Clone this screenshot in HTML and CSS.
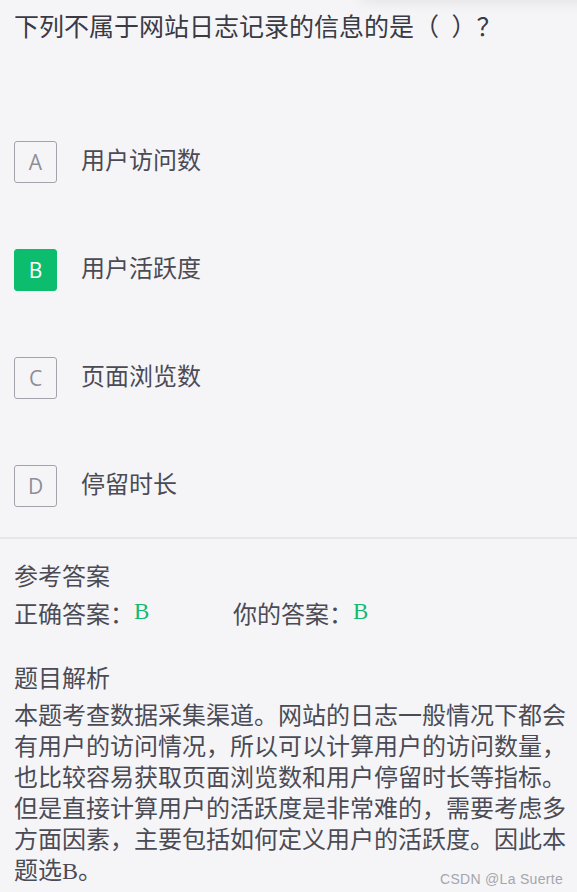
FILE: index.html
```html
<!DOCTYPE html>
<html lang="zh-CN">
<head>
  <meta charset="UTF-8">
  <title>题目详情</title>
  <link rel="stylesheet" href="styles.css">
</head>
<body>
  <div class="top-shade"></div>
  <div class="page">
    <div class="question">下列不属于网站日志记录的信息的是（&ensp;）？</div>

    <ul class="options">
      <li class="option"><span class="opt-key">A</span><span class="opt-text">用户访问数</span></li>
      <li class="option"><span class="opt-key selected">B</span><span class="opt-text">用户活跃度</span></li>
      <li class="option"><span class="opt-key">C</span><span class="opt-text">页面浏览数</span></li>
      <li class="option"><span class="opt-key">D</span><span class="opt-text">停留时长</span></li>
    </ul>

    <div class="divider"></div>

    <div class="answer-box">
      <div class="label">参考答案</div>
      <div class="answer-row">
        <span class="answer-item">正确答案：<b class="ans">B</b></span>
        <span class="answer-item">你的答案：<b class="ans">B</b></span>
      </div>

      <div class="label analysis-label">题目解析</div>
      <p class="analysis">本题考查数据采集渠道。网站的日志一般情况下都会有用户的访问情况，所以可以计算用户的访问数量，也比较容易获取页面浏览数和用户停留时长等指标。但是直接计算用户的活跃度是非常难的，需要考虑多方面因素，主要包括如何定义用户的活跃度。因此本题选B。</p>
    </div>
  </div>
  <div class="watermark">CSDN @La Suerte</div>
</body>
</html>
```

FILE: styles.css
```css
body {
  margin: 0;
  background: #f5f5f8;
  font-family: "Noto Sans CJK SC", "Noto Sans", sans-serif;
  color: #4b4b55;
  height: 892px;
  overflow: hidden;
  position: relative;
}
.top-shade {
  position: absolute;
  top: -14px;
  left: 360px;
  width: 260px;
  height: 14px;
  border-radius: 10px;
  box-shadow: 0 2px 14px rgba(0,0,0,0.08);
}
.page {
  padding: 9px 14px 0 14px;
}
.question {
  font-size: 25px;
  line-height: 32px;
  color: #3a3a44;
}
.options {
  list-style: none;
  margin: 100px 0 0 0;
  padding: 0;
  display: flex;
  flex-direction: column;
  gap: 66px;
}
.option {
  display: flex;
  align-items: center;
  height: 42px;
}
.opt-key {
  box-sizing: border-box;
  width: 43px;
  height: 42px;
  border: 1px solid #a3a3ad;
  border-radius: 3px;
  display: flex;
  align-items: center;
  justify-content: center;
  font-size: 21px;
  color: #8e8e98;
  font-family: "Open Sans", "Noto Sans", sans-serif;
}
.opt-key.selected {
  background: #0dbd6e;
  border-color: #0dbd6e;
  color: #fff;
}
.opt-text {
  margin-left: 24px;
  font-size: 24px;
  color: #4b4b55;
  margin-top: -8px;
}
.divider {
  height: 2px;
  background: #e5e5ee;
  margin: 30px -14px 0 -14px;
}
.answer-box {
  padding-top: 20px;
}
.label {
  font-size: 24px;
  line-height: 32px;
  color: #4b4b55;
}
.answer-row {
  display: flex;
  margin-top: 5px;
  font-size: 24px;
  line-height: 32px;
}
.answer-item {
  width: 219px;
}
.ans {
  font-weight: normal;
  font-family: "Liberation Serif", serif;
  color: #14b96e;
  font-size: 23px;
  margin-left: 0;
  vertical-align: 4px;
}
.analysis-label {
  margin-top: 32px;
}
.analysis {
  margin: 8px -8px 0 0;
  font-size: 24px;
  line-height: 31px;
  font-family: "Liberation Serif", "Noto Sans CJK SC", serif;
  color: #4b4b55;
}
.watermark {
  position: absolute;
  right: 14px;
  bottom: 5px;
  font-size: 14px;
  color: #a5a5ad;
  font-family: "Liberation Sans", Arial, sans-serif;
  letter-spacing: 0.3px;
}
```
